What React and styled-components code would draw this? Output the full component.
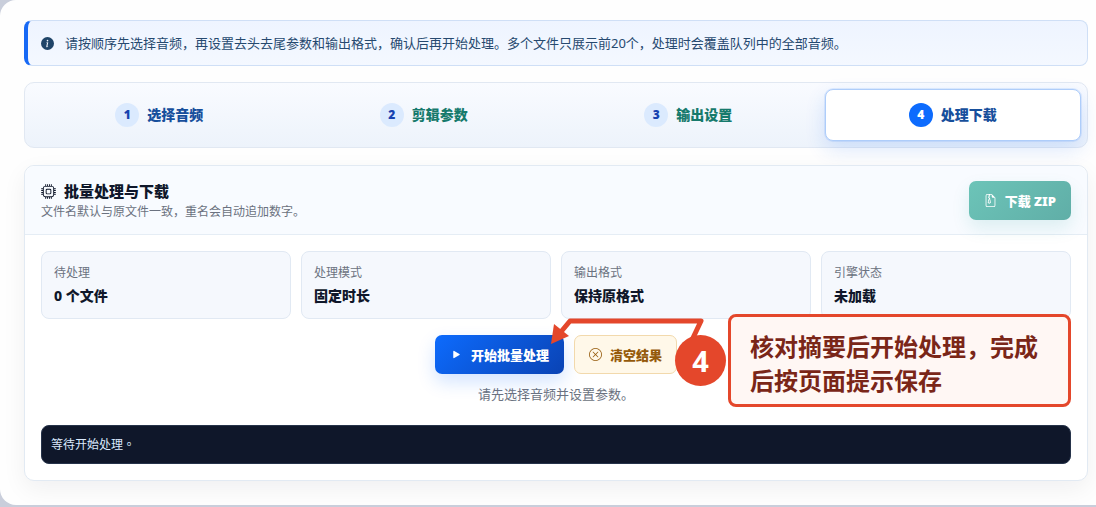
import React from "react";
import styled, { createGlobalStyle } from "styled-components";
import {
  BsInfoCircleFill,
  BsCpu,
  BsFileEarmarkZip,
  BsPlayFill,
  BsXCircle,
} from "react-icons/bs";

const GlobalStyle = createGlobalStyle`
  *, *::before, *::after { box-sizing: border-box; }
  body {
    margin: 0;
    background: #c9cedb;
    color: #0f172a;
    font-family: "Noto Sans", "Noto Sans CJK SC", sans-serif;
    font-size: 13px;
    line-height: 20px;
  }
  button { font-family: inherit; }
`;

const Shell = styled.main`
  display: flex;
  flex-direction: column;
  padding: 20px 8px 24px 24px;
  background: #fefefe;
  border-radius: 16px 0 0 16px;
`;

const Notice = styled.div`
  display: flex;
  align-items: center;
  gap: 11px;
  padding: 12px 13px;
  color: #26496f;
  background: linear-gradient(180deg, #eef4ff, #f4f8ff);
  border: 1px solid #cfdff6;
  border-left: 4px solid #1769f5;
  border-radius: 8px;

  svg {
    flex: none;
    color: #1f4468;
  }
`;

const Steps = styled.nav`
  display: grid;
  grid-template-columns: repeat(4, 1fr);
  gap: 8px;
  margin-top: 16px;
  padding: 6px;
  background: linear-gradient(180deg, #f9fbff, #edf3fb);
  border: 1px solid #e1e8f2;
  border-radius: 10px;
`;

const StepButton = styled.button`
  display: flex;
  align-items: center;
  justify-content: center;
  gap: 8px;
  height: 52px;
  padding: 0 12px;
  color: ${(p) => (p.$done ? "#167a6c" : "#174f9c")};
  background: ${(p) => (p.$active ? "#fff" : "transparent")};
  border: 1px solid ${(p) => (p.$active ? "#aecdfa" : "transparent")};
  border-radius: 8px;
  box-shadow: ${(p) =>
    p.$active
      ? "0 0 0 1px rgba(23, 105, 245, 0.1), 0 8px 20px rgba(23, 105, 245, 0.16)"
      : "none"};
  font-size: 14px;
  line-height: 20px;
  font-weight: 800;
`;

const StepNumber = styled.span`
  display: grid;
  place-items: center;
  width: 24px;
  height: 24px;
  border-radius: 50%;
  color: ${(p) => (p.$active ? "#fff" : "#1742b0")};
  background: ${(p) => (p.$active ? "#0d6bfd" : "#dbeafe")};
  font-size: 12px;
  font-weight: 900;
`;

const Card = styled.section`
  margin-top: 17px;
  background: #fff;
  border: 1px solid #e2eaf3;
  border-radius: 10px;
  box-shadow: 0 8px 24px rgba(15, 23, 42, 0.06);
`;

const CardHeader = styled.header`
  display: flex;
  align-items: flex-start;
  justify-content: space-between;
  padding: 15px 16px 12px;
  background: #f8fbff;
  border-bottom: 1px solid #e5edf5;
  border-radius: 10px 10px 0 0;
`;

const Title = styled.h2`
  display: flex;
  align-items: center;
  gap: 8px;
  margin: 0;
  font-size: 15px;
  line-height: 20px;
  font-weight: 800;
`;

const Subtitle = styled.p`
  margin: 1px 0 0;
  color: #6b7280;
  font-size: 12px;
  line-height: 20px;
`;

const ActionButton = styled.button`
  display: inline-flex;
  align-items: center;
  justify-content: center;
  gap: 8px;
  height: 39px;
  padding: 0 15px;
  border: 1px solid transparent;
  border-radius: 7px;
  font-size: 13px;
  line-height: 20px;
  font-weight: 900;
`;

const DownloadButton = styled(ActionButton)`
  color: #fff;
  background: linear-gradient(135deg, #6cc4b8, #60aea7);
  border: 0;
  box-shadow: 0 8px 18px rgba(15, 148, 136, 0.12);
`;

const StartButton = styled(ActionButton)`
  color: #fff;
  background: linear-gradient(135deg, #0d6bfd, #0a43b4);
  border: 0;
  box-shadow: 0 8px 18px rgba(13, 107, 253, 0.18);
`;

const ClearButton = styled(ActionButton)`
  padding: 0 14px;
  color: #955a0b;
  background: #fff8e9;
  border-color: #f2d9ac;
`;

const CardBody = styled.div`
  padding: 16px;
`;

const Metrics = styled.dl`
  display: grid;
  grid-template-columns: repeat(4, 1fr);
  gap: 10px;
  margin: 0;
`;

const Metric = styled.div`
  padding: 11px 12px 12px;
  background: #f5f8fd;
  border: 1px solid #e1e9f3;
  border-radius: 8px;

  dt {
    color: #6b7280;
    font-size: 12px;
    line-height: 20px;
  }

  dd {
    margin: 3px 0 0;
    font-size: 14px;
    line-height: 20px;
    font-weight: 800;
  }
`;

const Actions = styled.div`
  position: relative;
  display: flex;
  justify-content: center;
  gap: 10px;
  margin-top: 16px;
`;

const Hint = styled.p`
  margin: 10px 0 21px;
  color: #6b7280;
  text-align: center;
`;

const Log = styled.output`
  display: block;
  padding: 8px 9px 10px;
  color: #dbeafe;
  background: #0f172a;
  border: 1px solid #26334a;
  border-radius: 8px;
  font-family: "Noto Sans CJK TC", monospace;
  font-size: 12px;
  line-height: 19px;
`;

const Guide = styled.aside`
  position: absolute;
  top: -21px;
  right: 0;
  display: flex;
  align-items: center;
  justify-content: flex-end;
  gap: 2px;
  width: 520px;
  color: #e4472b;
  pointer-events: none;
`;

const GuideArrow = styled.svg`
  position: absolute;
  top: 0;
  left: 0;
`;

const GuideNumber = styled.span`
  position: relative;
  display: grid;
  place-items: center;
  flex: none;
  width: 51px;
  height: 51px;
  color: #fff;
  background: #e4472b;
  border-radius: 50%;
  font-size: 29px;
  line-height: 40px;
  font-weight: 700;
`;

const GuideText = styled.p`
  width: 343px;
  margin: 0;
  padding: 12px 19px 7px;
  color: #7a2618;
  background: #fff7f4;
  border: 3px solid #e4472b;
  border-radius: 8px;
  font-family: "Noto Sans CJK SC", sans-serif;
  font-size: 24px;
  line-height: 34px;
  font-weight: 700;
`;

const steps = [
  { label: "选择音频" },
  { label: "剪辑参数", done: true },
  { label: "输出设置", done: true },
  { label: "处理下载", active: true },
];

const metrics = [
  ["待处理", "0 个文件"],
  ["处理模式", "固定时长"],
  ["输出格式", "保持原格式"],
  ["引擎状态", "未加载"],
];

export default function App() {
  return (
    <>
      <GlobalStyle />
      <Shell lang="zh-CN">
        <Notice>
          <BsInfoCircleFill size={13} />
          <span>
            请按顺序先选择音频，再设置去头去尾参数和输出格式，确认后再开始处理。多个文件只展示前20个，处理时会覆盖队列中的全部音频。
          </span>
        </Notice>

        <Steps>
          {steps.map((s, i) => (
            <StepButton
              key={s.label}
              type="button"
              $done={s.done}
              $active={s.active}
              aria-current={s.active ? "step" : undefined}
            >
              <StepNumber $active={s.active}>{i + 1}</StepNumber>
              {s.label}
            </StepButton>
          ))}
        </Steps>

        <Card>
          <CardHeader>
            <div>
              <Title>
                <BsCpu size={15} />
                批量处理与下载
              </Title>
              <Subtitle>文件名默认与原文件一致，重名会自动追加数字。</Subtitle>
            </div>
            <DownloadButton type="button" disabled>
              <BsFileEarmarkZip size={13} />
              下载 ZIP
            </DownloadButton>
          </CardHeader>

          <CardBody>
            <Metrics>
              {metrics.map(([name, value]) => (
                <Metric key={name}>
                  <dt>{name}</dt>
                  <dd>{value}</dd>
                </Metric>
              ))}
            </Metrics>

            <Actions>
              <StartButton type="button">
                <BsPlayFill size={13} />
                开始批量处理
              </StartButton>
              <ClearButton type="button">
                <BsXCircle size={13} />
                清空结果
              </ClearButton>
              <Guide>
                <GuideArrow width="170" height="50" viewBox="0 0 170 50" aria-hidden="true">
                  <path
                    d="M141 26L150 7H19L9 19"
                    fill="none"
                    stroke="currentColor"
                    strokeWidth="5"
                    strokeLinejoin="round"
                  />
                  <path d="M0 30L3 10L18 22Z" fill="currentColor" />
                </GuideArrow>
                <GuideNumber>4</GuideNumber>
                <GuideText>核对摘要后开始处理，完成后按页面提示保存</GuideText>
              </Guide>
            </Actions>

            <Hint>请先选择音频并设置参数。</Hint>
            <Log lang="zh-TW">等待开始处理。</Log>
          </CardBody>
        </Card>
      </Shell>
    </>
  );
}
